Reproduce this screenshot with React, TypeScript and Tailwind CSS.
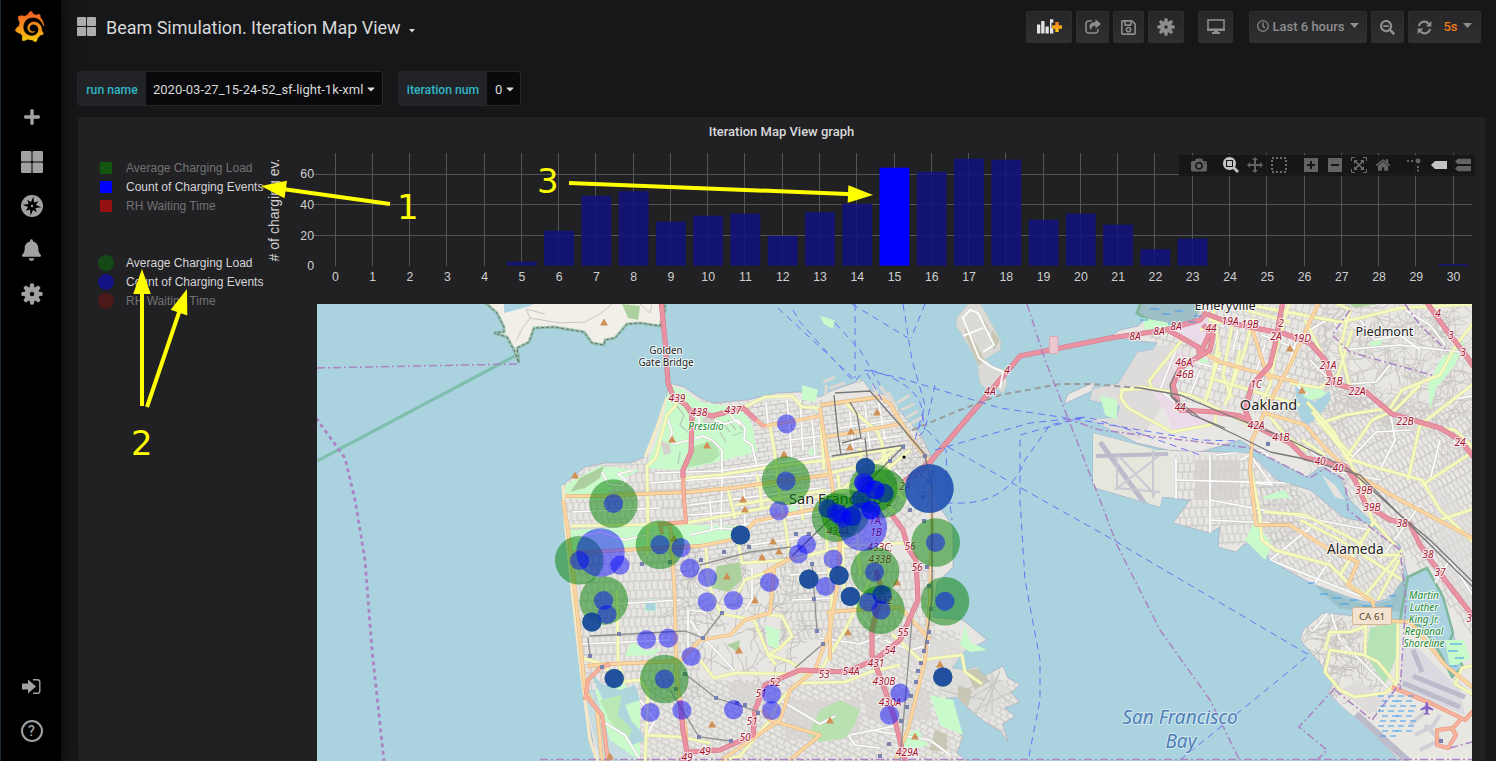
import React from "react";
import { FaPlus, FaRegClock, FaRegSave, FaSearchMinus, FaBell, FaCaretDown } from "react-icons/fa";
import { SiGrafana } from "react-icons/si";

type Pt = [number, number];

/* ---------- icons ---------- */
function Gear({ className }: { className: string }) {
  return (
    <svg viewBox="0 0 24 24" className={className} fill="currentColor">
      <path
        fillRule="evenodd"
        d="M12 4a8 8 0 1 0 0 16a8 8 0 0 0 0-16zM12 9.600a2.400 2.400 0 1 1 0 4.800a2.400 2.400 0 0 1 0-4.800z"
      />
      {[0, 45, 90, 135, 180, 225, 270, 315].map((a) => (
        <path key={a} d="M9.400 5L10 .8Q12-.2 14 .8L14.600 5z" transform={`rotate(${a} 12 12)`} />
      ))}
    </svg>
  );
}
function Squares({ className }: { className: string }) {
  return (
    <svg viewBox="0 0 22 22" className={className} fill="currentColor">
      <rect x="0" y="0" width="10.500" height="10.500" rx="1.300" />
      <rect x="11.500" y="0" width="10.500" height="10.500" rx="1.300" />
      <rect x="0" y="11.500" width="10.500" height="10.500" rx="1.300" />
      <rect x="11.500" y="11.500" width="10.500" height="10.500" rx="1.300" />
    </svg>
  );
}
function Compass() {
  return (
    <svg viewBox="0 0 22 22" className="size-[22px]">
      <circle cx="11" cy="11" r="11" fill="#9fa1a2" />
      <g transform="rotate(8 11 11)" fill="#000">
        <path d="M11 1.500L13 9L20.500 11L13 13L11 20.500L9 13L1.500 11L9 9z" />
        <path d="M5.500 5.500L11 8L16.500 5.500L14 11L16.500 16.500L11 14L5.500 16.500L8 11z" />
      </g>
      <circle cx="11" cy="11" r="1.200" fill="#9fa1a2" />
    </svg>
  );
}
function SignIn() {
  return (
    <svg viewBox="0 0 19 15" className="h-[15px] w-[19px]" fill="#9fa1a2">
      <path d="M0 4.500h6V0.500l8 7-8 7V10.500H0z" />
      <path d="M11 .7h4.500a2.300 2.300 0 0 1 2.300 2.300v9a2.300 2.300 0 0 1-2.300 2.300H11" fill="none" stroke="#9fa1a2" strokeWidth="1.400" />
    </svg>
  );
}
function ShareIcon() {
  return (
    <svg viewBox="0 0 16 15" className="mt-[-2px] h-[15px] w-[16px]">
      <path d="M7 2H3.500A2.500 2.500 0 0 0 1 4.500v7A2.500 2.500 0 0 0 3.500 14h7a2.500 2.500 0 0 0 2.500-2.500V10" fill="none" stroke="#8e8e8e" strokeWidth="1.500" />
      <path d="M10.500.3L16 4.900l-5.500 4.600V6.800C7.800 6.700 6.200 7.400 6.200 11.300 2.600 7 5.200 3 10.500 3z" fill="#8e8e8e" />
    </svg>
  );
}
function AddPanel() {
  return (
    <svg viewBox="0 0 25 15" className="mt-[-1px] h-[15px] w-[25px]">
      <path d="M0 5.500h3.300V14.500H0zM4.200 2h3.300v12.500H4.200zM8.500 7.500h3.300v7H8.500zM13 .3h3.300v3.500h-1.800v5.500h1.800v5.200H13z" fill="#e3e3e3" />
      <defs>
        <linearGradient id="plus" x1="0" y1="0" x2="0" y2="1">
          <stop offset="0" stopColor="#f07a28" />
          <stop offset="1" stopColor="#fbca0a" />
        </linearGradient>
      </defs>
      <path d="M18.300 3h3.400v3.300H25v3.400h-3.300V13h-3.400V9.700H15V6.300h3.300z" fill="url(#plus)" />
    </svg>
  );
}
function RefreshIcon() {
  return (
    <svg viewBox="0 0 16 16" className="size-[15px]" fill="none" stroke="#8e8e8e" strokeWidth="2.200">
      <path d="M2 6.500A6 6 0 0 1 12.500 4" />
      <path d="M14 9.500A6 6 0 0 1 3.500 12" />
      <path d="M15.300 1v6h-6zM.7 15V9h6z" fill="#8e8e8e" stroke="none" />
    </svg>
  );
}

const CAMERA =
  "m500 450c-83 0-150-67-150-150 0-83 67-150 150-150 83 0 150 67 150 150 0 83-67 150-150 150z m400 150h-120c-16 0-34 13-39 29l-31 93c-6 15-23 28-40 28h-340c-16 0-34-13-39-28l-31-94c-6-15-23-28-40-28h-120c-55 0-100-45-100-100v-450c0-55 45-100 100-100h800c55 0 100 45 100 100v450c0 55-45 100-100 100z m-400-550c-138 0-250 112-250 250 0 138 112 250 250 250 138 0 250-112 250-250 0-138-112-250-250-250z m365 380c-19 0-35 16-35 35 0 19 16 35 35 35 19 0 35-16 35-35 0-19-16-35-35-35z";
const ZOOM =
  "m1000-25l-250 251c40 63 63 138 63 218 0 224-182 406-407 406-224 0-406-182-406-406s183-406 407-406c80 0 155 22 218 62l250-250 125 125z m-812 250l0 438 437 0 0-438-437 0z m62 375l313 0 0-312-313 0 0 312z";
const PAN =
  "m1000 350l-187 188 0-125-250 0 0 250 125 0-188 187-187-187 125 0 0-250-250 0 0 125-188-188 186-187 0 125 252 0 0-250-125 0 187-188 188 188-125 0 0 250 250 0 0-126 187 188z";
const HOME =
  "m786 296v-267q0-15-11-26t-25-10h-214v214h-143v-214h-214q-15 0-25 10t-11 26v267q0 1 0 2t0 2l321 264 321-264q1-1 1-4z m124 39l-34-41q-5-5-12-6h-2q-7 0-12 3l-386 322-386-322q-7-4-13-3-7 1-12 6l-35 41q-4 6-3 13t6 12l401 334q18 15 42 15t43-15l136-113v108q0 8 5 13t13 5h107q8 0 13-5t5-13v-227l122-102q6-4 6-12t-4-13z";
const PLUS = "m1 787l0-875 875 0 0 875-875 0z m687-500l-187 0 0-187-125 0 0 187-188 0 0 125 188 0 0 187 125 0 0-187 187 0 0-125z";
const MINUS = "m0 788l0-876 876 0 0 876-876 0z m688-500l-500 0 0 125 500 0 0-125z";
const TAG = "m375 725l0 0-375-375 375-374 0-1 1125 0 0 750-1125 0z";
const TAGS = "m187 786l0 2-187-188 188-187 0 0 937 0 0 373-938 0z m0-499l0 1-187-188 188-188 0 0 937 0 0 376-938-1z";

function ModeIcon({ d, w, bright }: { d: string; w: number; bright?: boolean }) {
  return (
    <span className="flex h-[21px] w-6 items-center justify-center">
      <svg viewBox={`0 0 ${w} 1000`} className="h-4 w-4" fill={bright ? "#c4c4c5" : "#636364"}>
        <path d={d} transform="matrix(1 0 0 -1 0 850)" />
      </svg>
    </span>
  );
}
function ModeBar() {
  return (
    <div className="absolute left-[1101px] top-[38px] flex h-[21px] w-[296px] gap-2 bg-[#141415]/85 pb-px pl-[8px]">
      <div className="mt-[-1px] flex"><ModeIcon d={CAMERA} w={1000} /></div>
      <div className="mt-[-1px] flex">
        <ModeIcon d={ZOOM} w={1000} bright />
        <ModeIcon d={PAN} w={1000} />
        <span className="flex h-[21px] w-6 items-center justify-center">
          <svg viewBox="0 0 16 16" className="size-4">
            <rect x="1" y="1" width="14" height="14" fill="none" stroke="#6b6b6c" strokeWidth="2" strokeDasharray="2 2" />
          </svg>
        </span>
      </div>
      <div className="mt-[-1px] flex">
        <ModeIcon d={PLUS} w={876} />
        <ModeIcon d={MINUS} w={876} />
        <span className="flex h-[21px] w-6 items-center justify-center">
          <svg viewBox="0 0 16 16" className="size-4" fill="none" stroke="#6b6b6c">
            <path d="M.5 4V.5H4M12 .5h3.500V4M15.500 12v3.500H12M4 15.500H.5V12" />
            <path d="M4 4l8 8M12 4l-8 8" strokeWidth="1.600" />
            <path d="M3 3h4L3 7zM13 3v4L9 3zM13 13H9l4-4zM3 13V9l4 4z" fill="#6b6b6c" stroke="none" />
          </svg>
        </span>
        <ModeIcon d={HOME} w={928} />
      </div>
      <div className="mt-[-1px] flex">
        <span className="flex h-[21px] w-6 items-center justify-center">
          <svg viewBox="0 0 16 16" className="size-4" fill="#636364">
            <path d="M0 3h2v2H0zM4 3h2v2H4zM10 9h2v2h-2zM10 12.500h2v2h-2z" />
            <circle cx="11" cy="4" r="2.400" />
          </svg>
        </span>
        <ModeIcon d={TAG} w={1500} bright />
        <ModeIcon d={TAGS} w={1125} />
      </div>
    </div>
  );
}

/* ---------- chart ---------- */
const BARS: Pt[] = [
  [5, 4], [6, 35], [7, 70], [8, 74.5], [9, 44], [10, 50], [11, 52], [12, 30], [13, 53.5], [14, 62], [15, 98],
  [16, 94], [17, 107], [18, 106], [19, 46], [20, 52], [21, 41], [22, 16.5], [23, 27], [30, 1.5],
];
const tickX = (i: number) => 335.5 + i * 37.27;
function Chart() {
  return (
    <svg viewBox="265 146 1215 144" className="block h-[144px] w-[1215px]" fontFamily="Liberation Sans, sans-serif" fill="#cfcfd0">
      <g stroke="#545455" strokeWidth="1" shapeRendering="crispEdges">
        {Array.from({ length: 31 }, (_, i) => (
          <path key={i} d={`M${Math.round(tickX(i)) - 0.5} 153V266`} />
        ))}
        {[174, 204, 235].map((y) => (
          <path key={y} d={`M313 ${y + 0.5}H1472`} />
        ))}
      </g>
      {BARS.map(([i, h]) => (
        <rect key={i} x={tickX(i) - 15} y={265.7 - h} width="29.800" height={h} fill={i === 15 ? "#0000ff" : "#11117f"} fillOpacity={i === 15 ? 1 : 0.86} />
      ))}
      <g fontSize="12.300" textAnchor="middle">
        {Array.from({ length: 31 }, (_, i) => (
          <text key={i} x={tickX(i)} y="281">{i}</text>
        ))}
      </g>
      <g fontSize="12.300" textAnchor="end">
        <text x="314" y="178">60</text>
        <text x="314" y="209">40</text>
        <text x="314" y="240">20</text>
        <text x="314" y="270">0</text>
      </g>
      <text transform="rotate(-90 279 210)" x="279" y="210" fontSize="14" textAnchor="middle" textLength="103">
        # of charging ev.
      </text>
    </svg>
  );
}

/* ---------- map geometry ---------- */
const MARIN = "M480 300L488 305L497 313L504 327L504 332L494 333L507 337L514 350L519 363L517 348L529 342L534 328L554 327L584 332L592 343L604 345L605 340L615 338L627 324L640 323L660 326L665 310L665 300z";
const SF = "M669 383L667 397L657 427L645 457L630 463L604 463L585 467L565 483L562 497L565 513L569 530L572 570L577 620L582 663L583 693L592 737L597 765L972 765L957 753L963 737L950 723L937 700L957 697L970 710L985 722L1000 731L1008 742L1003 724L1015 716L1005 708L1020 702L1011 693L1020 684L1008 678L1003 666L985 676L977 667L963 670L952 668L963 652L987 640L963 620L933 617L937 583L953 567L953 527L937 503L933 460L920 433L907 420L890 397L870 390L863 380L833 390L820 397L800 392L777 393L747 400L713 403L700 398L684 387z";
const OAK = "M1142 300L1147 318L1138 326L1120 330L1110 337L1157 343L1153 350L1138 352L1118 384L1096 388L1090 392L1064 404L1068 394L1095 382L1090 400L1120 406L1117 418L1090 419L1137 443L1190 455L1207 450L1240 440L1267 457L1307 477L1320 467L1340 477L1350 500L1367 517L1400 545L1408 577L1427 568L1443 597L1453 633L1463 667L1452 677L1476 700L1476 300z";
const ALAMEDA = "M1093 433L1157 450L1250 453L1277 480L1310 490L1343 517L1367 523L1397 543L1405 560L1403 580L1390 598L1373 603L1357 600L1310 583L1270 560L1257 540L1243 545L1236 552L1218 547L1220 527L1210 533L1173 523L1190 500L1162 497L1160 507L1093 487z";
const BAYFARM = "M1323 613L1303 630L1300 640L1320 663L1333 683L1328 693L1343 707L1373 733L1404 765L1476 765L1476 700L1452 677L1440 653L1423 627L1400 620z";
const TREASURE = "M968 304L957 318L956 325L977 360L980 383L985 388L996 388L1003 393L1007 384L1005 370L992 366L985 359L1000 350L1001 342L986 313L980 304z";

const YELLOW = [
  "M674 394L676 405L667 415L660 440L656 458L647 466L648 530L647 556",
  "M742 408L765 397L792 396L802 407L820 408",
  "M684 478L720 475L770 467L835 459L870 452L905 447",
  "M755 487L785 482L835 472L890 459",
  "M757 475L760 488L762 510M735 505L780 498L826 490M800 493L803 520M728 490L735 518",
  "M571 526L680 524L740 513L830 494L880 484",
  "M770 426L775 455L780 500L786 528",
  "M845 402L858 415L878 432L886 456L890 470",
  "M736 525L738 540L742 563",
  "M706 548L708 580L714 600L722 614L754 620L768 654L790 662L800 668",
  "M742 563L790 560L838 548M772 570L745 580L734 600",
  "M786 528L790 562M824 500L828 560L832 600L830 640",
  "M821 425L824 470M838 475L842 510L844 590M838 546L905 543M857 530L860 575",
  "M850 500L910 450M862 515L918 470M838 492L895 450M905 500L870 465M895 512L858 480M860 448L862 475M882 446L884 468",
  "M617 590L618 660L623 680",
  "M582 658L602 664L620 682L640 680L648 692L645 761",
  "M700 660L714 678L735 673L792 674L822 668L845 630L880 560",
  "M800 683L845 682L870 672L900 665",
  "M812 670L780 700L770 720L740 756L720 761",
  "M892 634L920 660L962 655L965 672L982 684",
  "M645 735L680 737L710 743",
  "M760 614L782 616L792 636L780 648L768 655L776 665",
  "M1182 340L1149 381L1152 388L1122 390L1121 398L1128 408L1172 432L1215 424L1216 410",
  "M1120 390L1140 387L1190 395L1230 415L1250 425",
  "M1200 330L1220 322L1210 320L1217 304",
  "M1216 325L1218 345L1212 380L1205 402",
  "M1232 326L1223 375L1232 398",
  "M1210 378L1250 390L1300 405M1245 310L1290 322M1220 352L1207 398M1240 350L1228 400",
  "M1253 318L1245 350L1232 385L1225 405",
  "M1290 300L1276 350L1270 385L1260 405L1285 435L1307 451",
  "M1244 304L1340 322L1360 318L1400 308L1476 304",
  "M1305 320L1320 350L1331 383L1350 388L1340 348L1350 310L1330 300",
  "M1318 424L1345 415L1390 408L1402 390L1440 375L1456 345L1476 320",
  "M1290 383L1320 388L1338 375L1352 330",
  "M1307 402L1334 432L1346 458L1372 420L1395 410L1420 385",
  "M1346 458L1378 468L1422 480L1440 510L1476 545",
  "M1312 412L1352 456M1316 418L1352 462M1302 440L1325 455",
  "M1408 480L1420 425L1476 382",
  "M1420 425L1455 430L1476 450",
  "M1422 485L1476 450M1440 520L1476 508",
  "M1346 455L1362 485L1372 520L1395 545",
  "M1250 465L1259 510L1262 540L1275 550L1330 565L1350 585L1373 600",
  "M1265 512L1305 515L1345 535L1380 555L1402 555",
  "M1300 520L1340 540L1402 580M1375 520L1340 575M1402 550L1363 598M1399 560L1378 600",
  "M1366 618L1365 655L1330 650L1325 672L1340 690L1355 697L1385 693L1397 683L1398 622",
  "M1366 626L1350 632L1330 632L1325 650M1364 655L1378 662L1395 683",
  "M1476 665L1462 668L1455 684L1476 696",
];
const ORANGE = [
  "M563 500L568 530L573 570L580 640L585 690L597 710L602 761",
  "M565 496L600 496L640 494L690 492L740 487L780 481L828 475",
  "M574 553L640 549L700 546L740 538L755 521L790 514L830 506",
  "M670 525L672 550L675 600L676 660L678 690L686 730L686 750",
  "M587 666L610 664L680 661L700 640L730 635L745 620L770 613L774 570L765 572L795 556",
  "M820 408L826 450L833 490L840 540L838 580L830 630L815 670L790 690L780 720L720 761",
  "M820 405L880 397L890 404L910 437L928 460L932 520L930 600L925 660L908 730L895 761",
  "M765 426L820 416M826 437L900 424",
  "M790 760L820 735L770 720L762 710",
  "M830 612L830 660M827 612L900 607L930 640",
  "M1200 350L1220 362L1252 371L1280 378L1298 382",
  "M1320 300L1290 365L1268 405L1252 440L1250 470L1256 525L1290 525L1330 550L1358 562L1348 585L1373 602",
  "M1250 322L1262 360L1270 380",
  "M1265 413L1305 425L1325 448L1348 470L1400 500L1476 540",
  "M1373 600L1374 620L1410 622L1425 640L1445 665L1476 690",
];
const TRUNK = [
  "M661 300L665 340L668 383L673 396L686 405L692 414L691 452L683 470L683 478",
  "M692 410L712 416L743 408L756 420",
  "M903 482L930 462L1000 380L1020 356L1060 348L1110 338L1165 330L1200 320L1207 312",
  "M1207 314L1230 323L1285 334L1310 343L1325 360L1332 383L1366 392L1392 414L1440 428L1460 440L1476 460",
  "M1168 330L1198 347L1200 355L1213 325M1203 325L1213 335L1210 350L1180 368L1173 385L1180 410L1215 412L1240 416L1265 431L1290 443L1305 458L1345 466L1355 480L1366 505L1390 520L1410 524L1420 545L1445 580L1476 620",
  "M1283 300L1275 345L1270 365L1252 385L1245 410L1252 426",
  "M1425 300L1450 335L1462 350L1476 370",
  "M892 515L903 530L908 548L916 560L918 600L900 640L875 660L845 672L800 670L765 685L755 710L753 735L720 750L690 752L680 761",
  "M876 570L882 590L872 630L872 655L885 690L895 720L905 761",
  "M680 700L683 730L687 752",
];
const SALMON = [
  "M683 476L684 500L686 522L660 524L662 534",
  "M756 420L765 427",
  "M585 700L588 680L600 668L610 664M585 695L602 715L608 761",
  "M1392 687L1430 703L1455 715L1465 720L1476 708M1462 718L1453 728L1437 730L1437 745L1448 748L1456 735L1452 728",
];
const WHITE = [
  "M668 420L672 432L670 440L674 444L690 440L703 436L712 440L722 450L722 470L721 530M690 410L700 420L696 430M715 420L725 424L738 420L745 428L744 440L752 445L757 466M728 412L740 425",
  "M655 473L720 471L830 455M650 483L800 472M572 512L660 508M600 605L680 600M580 644L670 640",
  "M602 472L608 484L622 486L626 480L618 474L634 470M575 538L600 532L625 540L650 534L668 530M690 535L720 528L750 530",
  "M800 400L803 450M787 400L792 460M766 402L768 424M744 490L745 530M710 500L712 530M812 418L815 455M790 440L820 436",
  "M690 505L820 488M690 515L730 512M740 525L820 512M750 545L820 535M790 575L835 572M792 600L835 598",
  "M850 412L853 450M865 405L870 448M840 428L895 420M878 398L885 440M838 444L900 436M895 470L915 492M885 478L905 500",
  "M780 700L820 724L835 716M870 730L930 740L950 755M850 735L900 725M848 735L855 745L880 748M820 638L860 644L880 636",
  "M1216 455L1262 450L1300 485L1340 490M1176 458L1176 500M1210 455L1210 540M1175 480L1290 483M1210 500L1370 530M1210 520L1270 523",
  "M1178 345L1160 390L1185 410M1240 345L1230 390M1340 350L1400 345L1460 352M1310 360L1330 380",
  "M1330 560L1310 590M1320 520L1270 560M1270 560L1370 600M1430 590L1450 560L1476 600",
  "M1314 630L1330 610L1340 640M1345 645L1390 690",
  "M640 700L655 720L645 740M850 600L870 625M884 640L910 650L930 645",
  "M600 720L625 735L640 760M690 620L700 635L720 655L735 672M688 610V650M690 610L705 612M752 568L752 600L745 610",
  "M1240 460L1250 455L1272 485L1255 483M1310 450L1330 470L1380 480M1420 505L1380 560",
  "M1310 330L1330 318L1345 335M1350 384L1376 382L1390 365M1360 320L1375 340L1400 335L1420 350M1405 310L1430 325L1445 345M1340 470L1376 432L1410 430M1380 470L1395 440L1390 410M1440 440L1430 480M1450 400L1476 395",
  "M1200 370L1190 395M1195 362L1230 372M1265 345L1255 375M1238 330L1233 350M1300 330L1285 375L1308 395M1262 335L1300 350",
];
const GREY_RAIL = [
  "M1140 388L1180 395L1220 412L1240 420L1290 440L1350 470L1400 515L1430 540L1476 585",
  "M1170 395L1200 418L1240 437L1270 452L1300 458L1360 475L1410 525L1476 590",
  "M1176 372L1170 385L1172 398L1192 415L1225 428",
  "M834 395L838 435L841 455M832 456L905 445M850 402L857 414L861 438L842 443M865 438L869 475",
  "M835 393L870 391L900 425L925 455L932 490",
  "M905 445L850 500L792 556M932 470L932 600L925 650",
];
const PARKS: [string, string][] = [
  ["M669 385L684 390L700 402L740 408L752 424L757 452L684 470L646 468L657 440L664 415z", "#c8facc"],
  ["M692 447L715 440L720 455L712 462L686 468z", "#b4e4ae"],
  ["M565 485L600 466L640 470L620 480L600 500L566 498z", "#c8facc"],
  ["M570 492L580 478L604 466L600 478L585 488z", "#add19e"],
  ["M570 530L680 524L735 526L736 540L660 548L572 550z", "#c8facc"],
  ["M632 640L645 651L660 648L655 655L625 656z", "#c8facc"],
  ["M595 690L620 680L640 700L640 761L610 740z", "#c8facc"],
  ["M717 566L740 562L742 580L728 592L712 588z", "#add19e"],
  ["M727 645L740 640L738 652z", "#add19e"],
  ["M765 625L780 630L778 650L768 645z", "#c8facc"],
  ["M820 710L840 700L860 710L855 725L845 738L820 742L808 735z", "#b9e0b0"],
  ["M802 385L818 390L815 402L802 400z", "#c8facc"],
  ["M930 695L953 700L963 735L940 725z", "#c8facc"],
  ["M900 735L918 730L928 745L905 750z", "#c8facc"],
  ["M965 625L970 642L987 650L970 652L960 645z", "#c8facc"],
  ["M1370 628L1398 622L1397 655L1385 685L1366 655z", "#b5e3b5"],
  ["M1445 640L1464 640L1470 658L1450 668z", "#c8facc"],
  ["M1345 300L1355 308L1400 300z", "#add19e"],
  ["M1440 360L1465 340L1455 365L1436 388L1430 410L1428 385z", "#c8facc"],
  ["M1297 388L1315 385L1330 395L1305 402z", "#c8facc"],
  ["M1255 520L1272 545L1265 560L1245 540z", "#c8facc"],
  ["M622 304L640 306L638 320L628 318z", "#add19e"],
  ["M820 316L834 320L833 329L824 324z", "#c8facc"],
  ["M1143 318L1180 325L1165 335L1145 330z", "#c8facc"],
  ["M1100 395L1117 400L1117 420L1105 415z", "#c8facc"],
  ["M1262 497L1285 490L1290 498L1265 499z", "#c8facc"],
  ["M1370 342L1384 338L1380 346L1370 346z", "#c8facc"],
  ["M1200 358L1208 360L1206 366L1199 364z", "#c8facc"],
  ["M809 449H817V455H809z", "#c8facc"],
  ["M790 506H797V512H790z", "#c8facc"],
];
const FERRY = [
  "M778 308L850 375L857 382M793 310L800 322L852 380M855 304L855 378M835 323L860 350L880 385M852 304L908 338M903 304L912 360L925 405L915 440M925 304L911 338",
  "M856 380L865 370L900 378L1000 408L1080 420L1200 440L1240 441M870 370Q925 385 923 420L915 435M882 400L865 370M922 415L925 430",
  "M935 450L1030 423L1085 417L1050 425L1025 460Q1010 500 965 503L940 503M948 447L1110 538L1309 655L1180 760",
  "M1085 417L1020 435L1020 500L1025 580L1040 660L1040 700L1028 761M927 430L946 450L947 480L952 520",
  "M935 385L925 430L918 437M1090 418L1130 430L1200 455",
];
const ADMIN = [
  "M317 368L517 364",
  "M1027 304L1045 360L1055 385L1100 500L1117 545L1160 630L1210 700L1240 761",
  "M540 759.500H1472",
  "M1065 418L1100 430L1250 448L1310 478L1325 468L1345 480L1348 510L1400 550L1406 600L1400 690",
  "M1335 688L1299 727L1327 750L1316 761M1335 690L1372 720L1400 683M1450 748L1472 742",
  "M1350 310L1332 335L1350 352L1435 376M1405 304L1420 325L1448 352",
];
const ROADLABELS: [string, number, number][] = [
  ["439", 677, 401.5], ["438", 699, 415.5], ["437", 733, 414], ["4", 1007, 374], ["4A", 990, 395],
  ["8A", 1135, 340], ["8A", 1159, 335], ["8A", 1176, 330], ["44", 1211, 332], ["19A", 1230, 325], ["19B", 1250, 328],
  ["2", 1281, 327], ["2A", 1276, 340], ["19D", 1302, 342], ["46A;", 1185, 366], ["46B", 1185, 378], ["1C", 1256, 388],
  ["21A", 1328, 369], ["21B", 1334, 385], ["22A", 1357, 395], ["44", 1180, 411], ["42A", 1256, 429], ["41B", 1281, 441],
  ["22B", 1405, 425], ["24", 1460, 446], ["40", 1320, 465], ["40", 1338, 472], ["39B", 1364, 494], ["39B", 1372, 511],
  ["38", 1402, 527], ["38", 1428, 558], ["37", 1440, 576], ["3", 1469, 622], ["4", 1438, 317], ["3", 1451, 339], ["3", 1463, 356],
  ["2C", 920, 477.5], ["2A", 905, 490], ["2", 889, 506], ["1A;", 876, 523.5], ["1B", 876, 535.5], ["434A", 838, 535],
  ["433C;", 880, 550.5], ["433B", 880, 562.5], ["56", 910, 549.5], ["56", 917, 571], ["432", 884, 604], ["55", 903, 636],
  ["54", 890, 654], ["431", 876, 667], ["54A", 851, 675], ["53", 824, 678], ["430B", 884, 685], ["430A", 890, 706],
  ["429A", 907, 756], ["52", 775, 686], ["51", 761, 697], ["51", 752, 725], ["50", 745, 741], ["49", 705, 755], ["49", 687, 761],
];
const PEAKS: Pt[] = [
  [604, 322], [672, 439], [707, 445], [575, 475], [877, 412], [851, 431], [850, 447], [784, 454], [743, 499], [745, 509],
  [674, 538], [773, 541], [779, 551], [762, 557], [727, 576], [755, 600], [739, 650], [848, 632], [897, 582], [940, 664],
  [830, 720], [915, 736], [712, 724], [610, 756], [1290, 348], [1302, 390],
];
const STATIONS: Pt[] = [
  [701, 560], [724, 552], [749, 547], [796, 534], [809, 534], [812, 564], [814, 599], [817, 631], [823, 644], [642, 564],
  [619, 634], [590, 656], [602, 667], [703, 638], [722, 613], [670, 562], [685, 674], [676, 689], [716, 698], [737, 703],
  [745, 705], [758, 713], [699, 737], [731, 741], [903, 447], [925, 456], [890, 461], [929, 481], [923, 497], [910, 510],
  [924, 521], [927, 567], [929, 586], [931, 609], [929, 632], [927, 642], [924, 651], [921, 663], [918, 671], [916, 682],
  [911, 696], [907, 707], [901, 721], [889, 744], [880, 756], [1268, 444], [1441, 741],
];

/* Map markers: green = average load, blue = event count. */
const BIG_G: Pt[] = [[613.5, 503.5], [786, 480.7], [579.2, 560.3], [603.8, 600.5], [660, 544.7], [664.3, 679], [935.7, 542.5], [945, 601.2], [875, 571.2], [880.5, 609.7], [873.3, 488], [883, 493.5], [836, 517.5], [845, 513], [929.3, 488.5]];
const BIG_B: Pt[] = [[600.5, 552.5], [862.8, 526.8], [929.3, 488.5]];
const DARK: Pt[] = [[740.4, 535], [591.9, 622], [614.2, 678.5], [808.8, 579.2], [839, 575.5], [850.3, 596.5], [942.8, 677], [865.4, 467.5]];
const SMALL_G: Pt[] = [...DARK, ...DARK, [882, 594.5], [861, 499], [884, 493.5], [852, 516.5], [828, 508.5]];
const SMALL_B: Pt[] = [
  ...DARK, [882, 594.5], [884, 493], [828, 508.5], [664.5, 679], [607, 614.3], [681, 547.7],
  [613.5, 503.5], [786, 481], [579.5, 560.5], [603.5, 600.5], [660, 544.7], [619.9, 565.2], [689.8, 568.2], [707.5, 577.5],
  [707.2, 601.8], [733.5, 600.5], [646.5, 639.5], [668.2, 638.2], [691.2, 656.5], [769.5, 582.5], [806.5, 544.5], [798.2, 554],
  [833.2, 559], [825.5, 586.5], [771.5, 694.2], [771.5, 710.5], [733.5, 709.7], [681.9, 710.2], [650.2, 712.5], [786.5, 423.8],
  [779, 510.8], [900, 693.2], [889.5, 715.2], [874.5, 572], [881, 610], [935.5, 542.5], [944.9, 601.3], [868.5, 602],
  [863.5, 482.5], [866, 484.5], [875, 490], [875, 490], [871, 510], [871, 510], [836.5, 513], [840, 514.5], [843, 518], [864, 482.5], [852, 516.5], [861, 499],
];

/* Winding residential streets, drawn from a fixed-seed generator. */
function squiggles(x0: number, y0: number, x1: number, y1: number, count: number, seed: number): string {
  let s = seed;
  const rnd = () => {
    s = (s * 16807) % 2147483647;
    return s / 2147483647;
  };
  let d = "";
  for (let i = 0; i < count; i++) {
    let x = x0 + rnd() * (x1 - x0);
    let y = y0 + rnd() * (y1 - y0);
    let a = rnd() * 6.28;
    d += `M${x.toFixed(1)} ${y.toFixed(1)}`;
    for (let k = 0; k < 6; k++) {
      a += (rnd() - 0.5) * 1.3;
      x += Math.cos(a) * 5;
      y += Math.sin(a) * 5;
      d += `L${x.toFixed(1)} ${y.toFixed(1)}`;
    }
  }
  return d;
}

function Grid({ id, a, w, h }: { id: string; a: number; w: number; h: number }) {
  return (
    <pattern id={id} width={w} height={h * 2} patternUnits="userSpaceOnUse" patternTransform={`rotate(${a})`}>
      <path d={`M0 0H${w}M0 ${h}H${w}M${w / 2} 0V${h}M1 ${h}V${h * 2}`} stroke="#c2c0be" strokeWidth=".9" fill="none" />
    </pattern>
  );
}
function Roads({ list, w, c, k }: { list: string[]; w: number; c: string; k: string }) {
  return (
    <g fill="none" strokeLinejoin="round">
      {list.map((d, i) => <path key={"k" + i} d={d} stroke={k} strokeWidth={w + 1.1} />)}
      {list.map((d, i) => <path key={"c" + i} d={d} stroke={c} strokeWidth={w} />)}
    </g>
  );
}

function CityMap() {
  return (
    <svg viewBox="317 304 1155 457" className="block h-[457px] w-[1155px]" fontFamily="Noto Sans, sans-serif">
      <defs>
        <Grid id="gSunset" a={-2} w={6} h={9} />
        <Grid id="gCity" a={-8} w={9} h={4.5} />
        <Grid id="gSoma" a={37} w={7} h={7} />
        <Grid id="gSouth" a={28} w={8} h={5} />
        <Grid id="gOak" a={15} w={7} h={9} />
        <Grid id="gEast" a={-30} w={5} h={9} />
        <clipPath id="cSF"><path d={SF} /></clipPath>
        <clipPath id="cOak"><path d={OAK} /></clipPath>
        <clipPath id="cAla"><path d={ALAMEDA} /></clipPath>
        <clipPath id="cBf"><path d={BAYFARM} /></clipPath>
        <clipPath id="cLand"><path d={SF + OAK + ALAMEDA + BAYFARM} /></clipPath>
      </defs>
      <rect x="317" y="304" width="1155" height="457" fill="#aad3df" />

      <g stroke="#8a84a8" strokeWidth=".4">
        <path d={MARIN} fill="#f2efe9" stroke="#7fb89a" strokeWidth="3" strokeOpacity=".7" />
        <path d={SF} fill="#e8e6e2" />
        <path d={OAK} fill="#e9e7e3" />
        <path d={ALAMEDA} fill="#e8e6e2" />
        <path d={BAYFARM} fill="#e8e6e1" />
        <path d={TREASURE} fill="#dcdad6" stroke="#c9c5b4" />
      </g>
      <path d={MARIN} fill="none" stroke="#6d6970" strokeWidth="1" strokeDasharray="3 2" />
      <path d="M504 313L530 306L540 300L504 300z" fill="#aad3df" />
      <path d="M516 341L522 329L530 318L526 309L545 314M530 318L560 323L585 322L600 314L612 304M640 304L650 313L652 304" fill="none" stroke="#c9c7c4" />
      <path d="M965 325L985 360L979 366L966 338zM983 318L990 330L986 334zM992 330L1000 340L994 350L990 340z" fill="#c7c7b4" />

      <g clipPath="url(#cSF)">
        <path d="M560 455H686V560H560zM560 545H700V700H560z" fill="url(#gSunset)" />
        <path d="M686 400H935V500H686zM686 500H860V560H686z" fill="url(#gCity)" />
        <path d="M935 425L935 500L880 560L820 540z" fill="url(#gSoma)" />
        <path d="M780 560H935V640H780z" fill="url(#gSunset)" />
        <path d="M640 680H1030V761H640zM830 630H960V700H830z" fill="url(#gSouth)" />
        <path d="M583 690L605 690L640 700L620 720L640 761H600z" fill="#aad3df" opacity=".55" />
        <path d={squiggles(685, 560, 800, 670, 100, 77)} fill="none" stroke="#c0bebc" strokeWidth=".9" />
        <path d="M785 700H860V740H785zM860 690H930V720H870zM730 682L757 684V705H732z" fill="#d5d3d1" opacity=".7" />
        <path d="M885 640L960 640L1010 690L990 720L940 690z" fill="#dddcda" opacity=".8" />
        <path d="M935 730L947 735V752L930 750zM965 670L985 668L988 682L975 690zM958 685L972 690L966 715L958 700z" fill="#c7c7b4" />
      </g>
      <path d="M667 397L657 427L645 457M563 485L565 520L572 590L581 670L590 740L597 761" fill="none" stroke="#f5e9c6" strokeWidth="3" />
      <path d="M965 690L990 680M968 700L1000 680M975 710L1015 690M940 690L985 700M992 670V715M1000 670L985 712M980 672L1010 705M1000 672L975 715" fill="none" stroke="#c4c2bf" />
      <path d="M873 385L880 400M880 386L892 402M888 392L897 408M897 403L910 395M901 410L914 404M906 418L918 411M910 424L924 416M823 382L835 377M830 388L845 383M860 384L858 380M826 395V385" stroke="#dcd8d2" strokeWidth="3" />

      <g clipPath="url(#cOak)">
        <path d="M1150 304H1330V400L1290 420L1150 395z" fill="url(#gOak)" />
        <path d="M1270 425L1310 395L1476 410V640L1400 545z" fill="url(#gEast)" />
        <path d={squiggles(1320, 304, 1472, 420, 330, 5)} fill="none" stroke="#c9c7c4" strokeWidth=".9" />
        <path d={squiggles(1290, 400, 1472, 460, 60, 31)} fill="none" stroke="#cbc9c6" strokeWidth=".8" />
        <path d="M1090 355L1150 345L1180 380L1140 440L1090 425z" fill="#dddcdb" />
        <path d="M1150 345L1175 345L1150 380L1120 388z" fill="#dddcdb" />
        <path d="M1180 320L1210 314L1205 345L1180 335z" fill="#ebdbe8" />
        <path d="M1150 390L1172 396L1195 415L1218 415L1215 425L1173 431L1165 410z" fill="#ebdbe8" />
        <path d="M1172 345L1190 350L1178 380L1150 388z" fill="#ebdbe8" opacity=".5" />
        <path d="M1430 480L1476 520V620L1445 580z" fill="#dddcdb" opacity=".6" />
      </g>
      <path d="M1142 300L1137 313L1157 325L1195 322L1202 304z" fill="#9fbfc8" />
      <path d="M1142 300L1137 313L1157 325" fill="none" stroke="#7fb89a" strokeWidth="3" />
      <path d="M1322 475L1335 485L1345 500L1335 497z" fill="#e6e3df" />

      <g clipPath="url(#cAla)">
        <path d="M1175 455H1300V545H1175z" fill="url(#gSunset)" />
        <path d="M1260 480L1410 520V610L1250 560z" fill="url(#gEast)" />
        <path d="M1195 460H1240V500H1195z" fill="#d3d1cf" opacity=".8" />
        <path d="M1093 433L1170 447L1172 480L1160 507L1093 487z" fill="#e6e7dc" />
        <path d="M1100 442L1145 504" stroke="#bbbbcc" strokeWidth="5" />
        <path d="M1096 456L1168 454" stroke="#bbbbcc" strokeWidth="4" />
        <path d="M1115 490L1160 455M1118 455L1155 495M1117 458V488L1160 492M1153 450V498" stroke="#c9c9d4" strokeWidth="2" fill="none" />
      </g>
      <g clipPath="url(#cBf)">
        <path d={squiggles(1302, 614, 1385, 690, 110, 19)} fill="none" stroke="#c6c4c1" />
        <path d="M1405 640L1476 690V761H1405L1330 697L1372 720L1400 685z" fill="#e9e7e2" />
        <path d="M1403 640L1420 650L1460 690L1465 715L1400 690z" fill="#dadae0" />
        <path d="M1340 690L1358 680L1385 700L1370 715z" fill="#dddcdb" />
        <path d="M1356 714L1408 761" stroke="#bbbbcc" strokeWidth="7" />
        <path d="M1403 683L1460 707M1413 676L1465 697M1413 650L1422 672" stroke="#bbbbcc" strokeWidth="5" />
        <path d="M1410 725L1425 712M1415 735L1435 725M1420 750L1440 740L1425 725M1440 715L1430 730" stroke="#cfcfd8" strokeWidth="4" fill="none" />
      </g>
      <path d="M1315 585L1357 602L1372 605L1390 600L1406 575L1412 580L1403 612L1340 609L1328 598z" fill="#9cc2cc" />
      <path d="M1408 577L1427 568L1443 597L1453 633L1450 640L1463 667L1452 677L1440 653L1423 627L1400 620z" fill="#aad3df" stroke="#7fb89a" strokeWidth="2.500" />

      {PARKS.map(([d, c], i) => <path key={i} d={d} fill={c} />)}
      <path d="M1295 385L1300 383L1304 397L1315 402L1330 391L1330 400L1318 418L1305 426L1297 410z" fill="#aad3df" />
      <path d="M660 440L670 445L671 453L664 455zM704 416L716 414L714 424L702 422z" fill="#d4d0cc" />
      <path d="M722 422L730 432M728 420L736 430M720 432L726 442M676 405L684 415L680 425L688 432M732 436L742 432M680 452L678 464M735 418L742 430" stroke="#b7cdb8" strokeWidth="1.300" fill="none" />
      <path d="M645 600H656V611H645z" fill="#aad3df" stroke="#c8facc" />
      <path d="M590 672L602 684L620 690L635 685L640 700L625 705L632 722L640 730L645 740L632 745L625 728L610 715z" fill="#aad3df" opacity=".9" />
      <path d="M600 700L622 695L618 715L632 730L628 740L610 722z" fill="#b9e8b4" />

      <g clipPath="url(#cLand)"><Roads list={WHITE} w={1.7} c="#ffffff" k="#cfcdca" /></g>
      <Roads list={YELLOW} w={2.5} c="#f7fabf" k="#dcdfa4" />
      <Roads list={ORANGE} w={2.7} c="#fcd6a4" k="#e3b87c" />
      <Roads list={SALMON} w={3} c="#f9b29c" k="#e0907a" />
      <Roads list={TRUNK} w={4} c="#e892a2" k="#d8748a" />
      <g fill="none" stroke="#77777a" strokeWidth="1.300">{GREY_RAIL.map((d, i) => <path key={i} d={d} />)}</g>
      <path d="M588 638L590 656M590 636L685 631L703 638L722 613M700 565L750 552L790 547M685 674L716 698L760 712M812 564L817 631M823 644L795 668M670 690L699 737L731 741M912 620L906 690L900 761" fill="none" stroke="#909092" strokeWidth="1.300" />
      <path d="M912 430L960 410L1000 395L1060 384L1090 384L1140 388" fill="none" stroke="#9b9b9b" strokeWidth="2" strokeDasharray="6 4" />
      <path d="M1000 388L1003 372L990 366L979 358L963 318L970 310L978 313L994 345L983 352M963 336L983 328" fill="none" stroke="#fff" strokeWidth="1.800" />

      <path d="M317 461L515 356" stroke="#7fbfae" strokeWidth="3.200" />
      <g fill="none" stroke="#6a73f5" strokeWidth="1" strokeDasharray="7 5">{FERRY.map((d, i) => <path key={i} d={d} />)}</g>
      <g fill="none" stroke="#ac83c4" strokeWidth="1.500" strokeDasharray="8 3 2 3">{ADMIN.map((d, i) => <path key={i} d={d} />)}</g>
      <path d="M316 418L345 458L355 500L365 560L372 650L384 761" fill="none" stroke="#ac83c4" strokeWidth="2.800" strokeDasharray="4 3.500" />
      <g stroke="#3d9bf0" strokeWidth="1">
        <path d="M1150 309h9M1162 314h8M1140 320h8M1175 311h8M1194 316h8M1168 324h8M1188 322h8M1320 594h8M1332 598h9M1340 604h9M1350 600h8M1362 606h10M1385 606h8M1388 596h8M1308 583h7M1450 644h12M1448 651h10M1455 658h9M1449 666h8" />
        {Array.from({ length: 34 }, (_, i) => (
          <path key={i} d={`M${1378 + (i % 4) * 9 + ((i * 7) % 6)} ${696 + Math.floor(i / 4) * 5}h6`} />
        ))}
      </g>

      {PEAKS.map(([x, y], i) => <path key={i} d={`M${x - 4} ${y + 3.5}L${x} ${y - 3.5}L${x + 4} ${y + 3.5}z`} fill="#d08f55" />)}
      {STATIONS.map(([x, y], i) => <rect key={i} x={x - 2} y={y - 2} width="4" height="4" fill="#7981b0" />)}
      <circle cx="904" cy="457" r="1.600" fill="#000" />
      <rect x="1049.500" y="336.500" width="8.500" height="17" rx="1" fill="#ebc8d0" stroke="#d9a8b2" />
      <path d="M1426 702h1.500l.8 4 5 3v1.500l-5-1.300-.4 3.500 1.600 1.200v1l-2.700-.7-2.700.7v-1l1.600-1.200-.4-3.500-5 1.300V709l5-3z" fill="#8461c4" />

      <g paintOrder="stroke" stroke="#fff" strokeOpacity=".75" strokeWidth="2.200" strokeLinejoin="round" textAnchor="middle">
        <g fill="#222">
          <text x="666" y="354" fontSize="9.900">Golden</text>
          <text x="666" y="366" fontSize="9.900">Gate Bridge</text>
          <text x="1225" y="310" fontSize="12.700">Emeryville</text>
          <text x="1384.500" y="336" fontSize="12.700">Piedmont</text>
          <text x="1268.500" y="410" fontSize="14.600">Oakland</text>
          <text x="1355.300" y="554" fontSize="13.700">Alameda</text>
          <text x="835.500" y="504" fontSize="14.600">San Francisco</text>
        </g>
        <g fill="#4f80b8" fontStyle="italic" fontSize="19" strokeOpacity=".45">
          <text x="1180" y="723.500">San Francisco</text>
          <text x="1181" y="748">Bay</text>
        </g>
        <g fill="#228b32" fontStyle="italic" fontSize="10">
          <text x="706" y="430">Presidio</text>
          <text x="1424" y="599">Martin</text>
          <text x="1424" y="611">Luther</text>
          <text x="1424" y="623">King Jr.</text>
          <text x="1424" y="635">Regional</text>
          <text x="1424" y="647">Shoreline</text>
        </g>
        <g fill="#a3152f" fontStyle="italic" fontSize="10.200">
          {ROADLABELS.map(([t, x, y], i) => <text key={i} x={x} y={y}>{t}</text>)}
        </g>
      </g>
      <rect x="1352.500" y="607.500" width="39" height="17" rx="2" fill="#f3e2d0" stroke="#d8b592" />
      <text x="1372" y="620" textAnchor="middle" fontSize="9.800" fill="#5a4a2a">CA 61</text>

      <g fill="#008000" fillOpacity=".5">
        {BIG_G.map(([x, y], i) => <circle key={i} cx={x} cy={y} r="24.300" />)}
        {SMALL_G.map(([x, y], i) => <circle key={i} cx={x} cy={y} r="9.600" />)}
      </g>
      <g fill="#0000ff" fillOpacity=".46">
        {BIG_B.map(([x, y], i) => <circle key={i} cx={x} cy={y} r="24.300" />)}
        {SMALL_B.map(([x, y], i) => <circle key={i} cx={x} cy={y} r="9.600" />)}
      </g>
      <circle cx="929.300" cy="488.500" r="24.300" fill="#2c5fbc" fillOpacity=".5" />
      <g fill="#2450ac" fillOpacity=".5">
        {DARK.map(([x, y], i) => <circle key={i} cx={x} cy={y} r="9.600" />)}
      </g>
    </svg>
  );
}

/* ---------- page ---------- */
function Legend({ round, items }: { round?: boolean; items: [string, string, boolean][] }) {
  return (
    <ul className="flex w-full flex-col items-start">
      {items.map(([label, color, on]) => (
        <li key={label} className="flex h-[19px] items-center">
          <span className="flex w-[27px] shrink-0 justify-start">
            <span
              className={round ? "ml-[-1px] size-4 rounded-full" : "ml-[1px] size-3"}
              style={{ backgroundColor: color }}
            />
          </span>
          <span className={on ? "whitespace-nowrap text-[#d4d4d5]" : "whitespace-nowrap text-[#727273]"}>{label}</span>
        </li>
      ))}
    </ul>
  );
}

const BTN = "flex h-8 items-center justify-center rounded-[2px] border border-[#2f2f32] bg-gradient-to-b from-[#262628] to-[#303032] text-[#8e8e8e]";

function Arrow({ x1, y1, x2, y2 }: { x1: number; y1: number; x2: number; y2: number }) {
  const len = Math.hypot(x2 - x1, y2 - y1);
  const a = (Math.atan2(y2 - y1, x2 - x1) * 180) / Math.PI;
  return (
    <g transform={`translate(${x1} ${y1}) rotate(${a})`} fill="#ffff00">
      <rect x="0" y="-2" width={len - 20} height="4" />
      <path d={`M${len} 0L${len - 25} -8.800V8.800z`} />
    </g>
  );
}

export default function App() {
  return (
    <div className="relative flex h-[761px] w-[1496px] overflow-hidden bg-[#161719] font-[Roboto,sans-serif] text-[#d8d9da]">
      <aside className="z-10 flex w-[61px] shrink-0 flex-col items-center border-l border-[#1d2935] bg-black pl-[1px] text-[#9fa1a2] shadow-[0_0_16px_rgba(0,0,0,.75)]">
        <svg className="absolute size-0">
          <defs>
            <linearGradient id="brand" x1="0" y1="0" x2="0" y2="1">
              <stop offset="0" stopColor="#f05a28" />
              <stop offset="1" stopColor="#fbca0a" />
            </linearGradient>
          </defs>
        </svg>
        <SiGrafana className="mr-1 mt-[11px] size-[31px] fill-[url(#brand)] stroke-[url(#brand)] stroke-[0.3]" />
        <div className="mt-[64px] flex flex-1 flex-col items-center">
          <div className="flex h-[22px] items-center"><FaPlus className="size-[18px]" /></div>
          <Squares className="mt-[23px] size-[22px]" />
          <div className="mt-[22px]"><Compass /></div>
          <FaBell className="mt-[22px] h-[22px] w-[19px]" />
          <Gear className="mt-[22px] size-[22px]" />
        </div>
        <SignIn />
        <div className="mb-[19px] mt-[26px] flex size-[22px] items-center justify-center rounded-full border-2 border-[#9fa1a2] text-[14px] font-medium leading-none">?</div>
      </aside>

      <main className="flex min-w-0 flex-1 flex-col pl-4">
        <header className="flex h-[71px] items-start">
          <Squares className="mt-[17px] size-[19px] text-[#adaeaf]" />
          <h1 className="ml-[10px] mt-[14px] flex items-center whitespace-nowrap text-[18px] leading-7 tracking-[-0.02px] text-[#d8d9da]">
            Beam Simulation. Iteration Map View
            <svg viewBox="0 0 6 4" className="ml-[8px] mt-[5px] h-1 w-[6px]"><path d="M0 0H6L3 3.500z" fill="#d8d9da" /></svg>
          </h1>
          <div className="ml-auto mr-[15px] mt-[11px] flex">
            <button className={`${BTN} mr-1 w-[46px]`}><AddPanel /></button>
            <button className={`${BTN} mr-1 w-[33px]`}><ShareIcon /></button>
            <button className={`${BTN} mr-1 w-[31px]`}><FaRegSave className="size-[17px]" /></button>
            <button className={`${BTN} mr-[14px] w-[36px]`}><Gear className="size-[18px]" /></button>
            <button className={`${BTN} mr-4 w-[35px]`}>
              <svg viewBox="0 0 18 15" className="mt-[-2px] h-[15px] w-[18px]"><path d="M1 1H17V11H1z" fill="none" stroke="#8e8e8e" strokeWidth="1.500" /><path d="M0 9.500H18V12H0zM5 13H13V15H5zM7 12h4v2H7z" fill="#8e8e8e" /></svg>
            </button>
            <button className={`${BTN} mr-1 w-[118px] text-[13px] font-medium`}>
              <FaRegClock className="mr-[3px] mt-[-3px] size-[12px]" />Last 6 hours
              <svg viewBox="0 0 9 5" className="mb-[3px] ml-[5px] h-[5px] w-[9px]"><path d="M0 0H9L4.500 5z" fill="#8e8e8e" /></svg>
            </button>
            <button className={`${BTN} mr-1 w-[33px]`}><FaSearchMinus className="size-[15px]" /></button>
            <button className={`${BTN} w-[33px] rounded-r-none`}><RefreshIcon /></button>
            <button className={`${BTN} w-[40px] rounded-l-none border-l-0 pr-[6px] text-[13px] font-medium`}>
              <span className="text-[#eb7b18]">5s</span>
              <svg viewBox="0 0 9 5" className="mb-[3px] ml-[5px] h-[5px] w-[9px]"><path d="M0 0H9L4.500 5z" fill="#8e8e8e" /></svg>
            </button>
          </div>
        </header>

        <div className="flex h-[35px] gap-[15px] text-[13px]">
          <div className="flex w-[306px] overflow-hidden rounded-[3px] border border-[#262628] bg-[#0a0a0c]">
            <span className="flex w-[68px] items-center justify-center bg-[#212327] pt-[3px] text-[12.200px] font-medium text-[#33b5c5]">run name</span>
            <span className="flex items-center whitespace-nowrap pl-[7px] pt-[2px] text-[13px]">2020-03-27_15-24-52_sf-light-1k-xml<FaCaretDown className="mb-[1px] ml-[2px] size-[12px]" /></span>
          </div>
          <div className="flex w-[123px] overflow-hidden rounded-[3px] border border-[#262628] bg-[#0a0a0c]">
            <span className="flex w-[88px] items-center justify-center bg-[#212327] pt-[3px] text-[12.200px] font-medium text-[#33b5c5]">iteration num</span>
            <span className="flex items-center pl-[8px] pt-[2px]">0<FaCaretDown className="mb-[1px] ml-[2px] size-[12px]" /></span>
          </div>
        </div>

        <section className="relative ml-[1px] mt-[11px] h-[644px] w-[1407px] rounded-t-[3px] bg-[#212124]">
          <h2 className="pt-[5px] text-center text-[13px] font-medium leading-[20px]">Iteration Map View graph</h2>
          <div className="flex">
            <div className="flex w-[187px] shrink-0 flex-col items-start gap-[38px] pl-[21px] pt-[16px] font-['Liberation_Sans',sans-serif] text-[12px]">
              <Legend items={[["Average Charging Load", "#115511", false], ["Count of Charging Events", "#0000ff", true], ["RH Waiting Time", "#951111", false]]} />
              <Legend round items={[["Average Charging Load", "#154a17", true], ["Count of Charging Events", "#131383", true], ["RH Waiting Time", "#4c191b", false]]} />
            </div>
            <div className="mt-[4px] flex flex-col">
              <Chart />
              <div className="ml-[52px] mt-[14px]"><CityMap /></div>
            </div>
          </div>
          <ModeBar />
        </section>
      </main>

      <svg viewBox="0 0 1496 761" className="pointer-events-none absolute inset-0 z-20 h-[761px] w-[1496px]" fontFamily="DejaVu Sans, sans-serif" fontSize="34" fill="#ffff00">
        <Arrow x1={390} y1={204} x2={261} y2={186} />
        <Arrow x1={569} y1={183} x2={873} y2={195} />
        <Arrow x1={142} y1={406} x2={142} y2={269} />
        <Arrow x1={147} y1={407} x2={187} y2={289} />
        <text x="397" y="219">1</text>
        <text x="131" y="455">2</text>
        <text x="537" y="193">3</text>
      </svg>
    </div>
  );
}
